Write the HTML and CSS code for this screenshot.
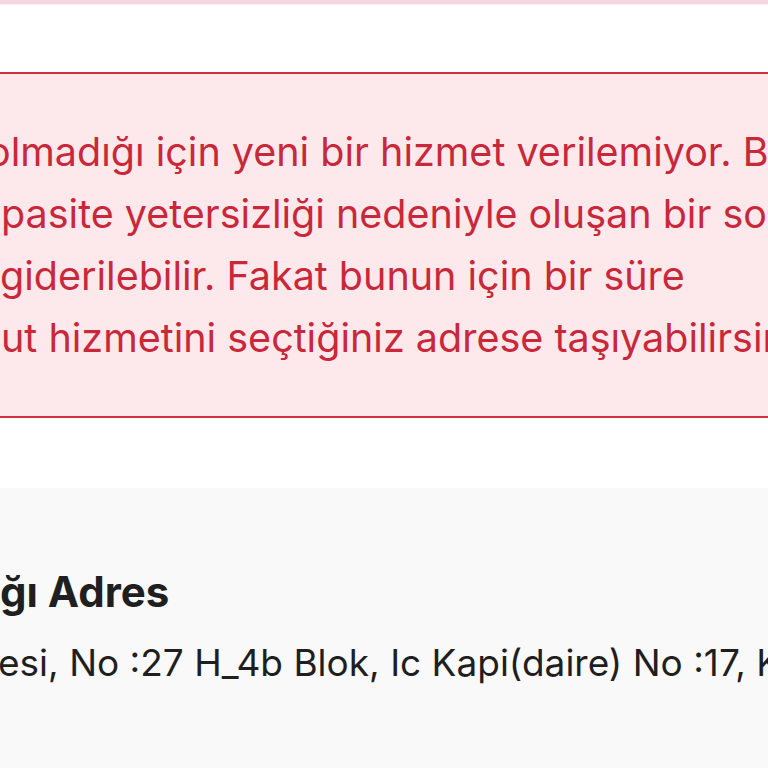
FILE: index.html
```html
<!DOCTYPE html>
<html lang="tr">
<head>
    <meta charset="UTF-8">
    <meta name="viewport" content="width=device-width, initial-scale=1.0">
    <title>Adres Kontrolü</title>
    <link rel="stylesheet" href="styles.css">
</head>
<body>
    <div class="topbar"></div>
    <main class="page">
        <div class="alert">
            <div class="alert-line line-1">olmadığı için yeni bir hizmet verilemiyor. Bu durum</div>
            <div class="alert-line line-2">pasite yetersizliği nedeniyle oluşan bir sorundur ve</div>
            <div class="alert-line line-3">giderilebilir. Fakat bunun için bir süre</div>
            <div class="alert-line line-4">ut hizmetini seçtiğiniz adrese taşıyabilirsiniz.</div>
        </div>
        <section class="address">
            <h2 class="address-title">ğı Adres</h2>
            <p class="address-text">esi, No :27 H_4b Blok, Ic Kapi(daire) No :17, Kadıköy</p>
        </section>
    </main>
</body>
</html>
```

FILE: styles.css
```css
body {
    margin: 0;
    height: 100vh;
    overflow: hidden;
    font-family: Inter, "Noto Sans", sans-serif;
    background: #fff;
}
.topbar {
    height: 4px;
    background: #f7d6e4;
    border-bottom: 1px solid #fbeef4;
}
.page {
    padding-top: 67px;
}
.alert {
    margin: 0 -20px;
    padding: 47px 20px;
    background: #fde8ec;
    border-top: 2px solid #d42f3c;
    border-bottom: 2px solid #d42f3c;
    color: #c9283a;
    font-size: 39.5px;
    line-height: 62px;
}
.alert-line {
    white-space: nowrap;
}
.line-1 { margin-left: -13px; }
.line-2 { margin-left: 1px; }
.line-3 { margin-left: 0; }
.line-4 { margin-left: 1px; }

.address {
    margin-top: 70px;
    padding: 79px 0 120px;
    background: #f9f9f9;
    color: #1f1f1f;
}
.address-title {
    margin: 0 0 24px;
    font-size: 42px;
    font-weight: 700;
    line-height: 50px;
    white-space: nowrap;
}
.address-text {
    margin: 0 0 0 -2px;
    font-size: 37px;
    line-height: 44px;
    white-space: nowrap;
}
```
